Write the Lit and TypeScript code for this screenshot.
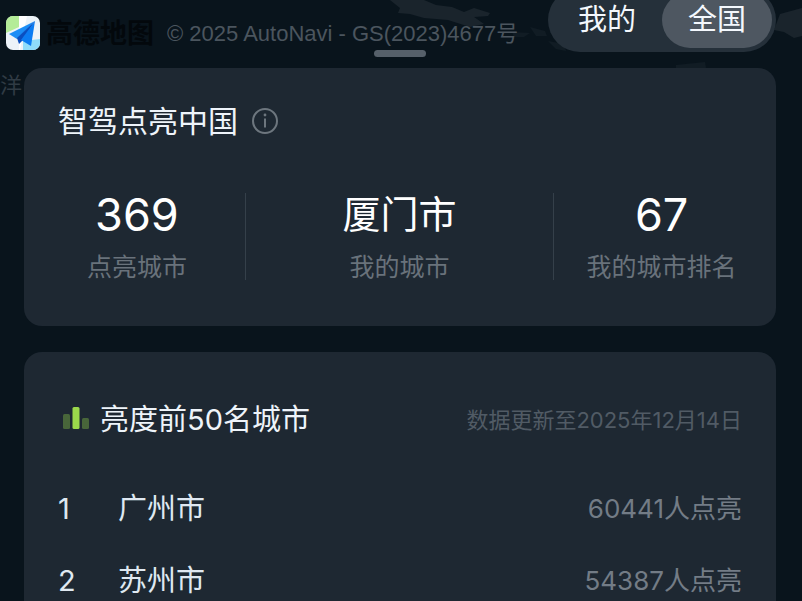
import { LitElement, html, css, svg } from "lit";
import { customElement, state } from "lit/decorators.js";

interface Stat {
  value: string;
  label: string;
}

interface CityRow {
  rank: number;
  name: string;
  count: number;
}

const STATS: Stat[] = [
  { value: "369", label: "点亮城市" },
  { value: "厦门市", label: "我的城市" },
  { value: "67", label: "我的城市排名" },
];

const CITIES: CityRow[] = [
  { rank: 1, name: "广州市", count: 60441 },
  { rank: 2, name: "苏州市", count: 54387 },
];

const TABS = ["我的", "全国"];

const logo = svg`
  <svg class="logo" viewBox="0 0 34 34" role="img" aria-label="高德地图">
    <defs>
      <clipPath id="tile"><rect width="34" height="34" rx="7" /></clipPath>
    </defs>
    <g clip-path="url(#tile)">
      <rect width="34" height="34" fill="#edf3f8" />
      <path d="M0 0H13V11L0 17Z" fill="#b4ec98" />
      <path d="M13 0H21L14 34H13Z" fill="#ffffff" />
      <path d="M17 25L34 23V34H17Z" fill="#8fdcfa" />
      <path d="M29 5L3 18L11 23Z" fill="#1c8ef6" />
      <path d="M29 5L11 22L13 28L17 24Z" fill="#0a4fc0" />
      <path d="M29 5L15 24L25 30Z" fill="#0c7cf2" />
    </g>
  </svg>`;

@customElement("app-root")
export class AppRoot extends LitElement {
  @state() private tab = "全国";

  static styles = css`
    :host {
      display: block;
      position: relative;
      height: 100vh;
      overflow: hidden;
      background: #09141c;
      color: #eef4fa;
      font-family: "Inter", "Noto Sans CJK SC", sans-serif;
      font-size: 29px;
      line-height: 42px;
    }
    * {
      box-sizing: border-box;
    }
    .map {
      position: absolute;
      top: 0;
      right: 0;
      width: 802px;
      height: 100px;
    }
    .place {
      position: absolute;
      top: 68px;
      left: 0;
      font-size: 22px;
      line-height: 34px;
      color: #303b44;
    }
    .page {
      position: relative;
      display: flex;
      flex-direction: column;
      min-height: 100%;
    }
    .credit {
      display: flex;
      align-items: center;
      height: 50px;
      padding: 16px 6px 0;
    }
    .logo {
      width: 34px;
      height: 34px;
      flex: none;
    }
    .brand,
    .copyright {
      line-height: 34px;
      padding-top: 2px;
    }
    .brand {
      margin-left: 6px;
      font-size: 27px;
      font-weight: 700;
      color: #03080c;
    }
    .copyright {
      margin-left: 13px;
      font-family: "Liberation Sans", "Noto Sans CJK SC", sans-serif;
      font-size: 22px;
      color: #4b555e;
    }
    .tabs {
      position: absolute;
      top: -12px;
      right: 26px;
      display: flex;
      padding: 4px;
      border-radius: 32px;
      background: #25303a;
    }
    .tab {
      width: 110px;
      height: 56px;
      padding: 0;
      border: 0;
      border-radius: 28px;
      background: none;
      color: #f4f8fd;
      font: inherit;
    }
    .tab[aria-pressed="true"] {
      background: #4e5761;
    }
    .sheet {
      flex: 1;
      display: flex;
      flex-direction: column;
      padding: 0 26px 0 24px;
    }
    .handle {
      align-self: center;
      width: 52px;
      height: 7px;
      margin-bottom: 11px;
      border-radius: 4px;
      background: #56606a;
    }
    .card {
      border-radius: 18px;
      background: #1e2832;
    }
    .summary {
      padding: 32px 0 46px;
      margin-bottom: 26px;
    }
    .ranking {
      flex: 1;
      padding: 47px 34px 0;
      border-radius: 18px 18px 0 0;
    }
    h1,
    h2 {
      margin: 0;
      font-size: inherit;
      font-weight: 400;
    }
    .title {
      display: flex;
      align-items: center;
      gap: 14px;
      padding: 0 34px;
    }
    .title h1 {
      font-size: 30px;
    }
    .info {
      width: 26px;
      height: 26px;
      padding: 0;
      border: 0;
      background: none;
      color: #6d767e;
    }
    .info svg {
      display: block;
      width: 26px;
      height: 26px;
    }
    .stats {
      display: grid;
      grid-template-columns: 7fr 10fr 7fr;
      margin: 51px 0 0;
      padding: 0 7px 0 5px;
    }
    .stat {
      display: flex;
      flex-direction: column-reverse;
      gap: 18px;
      text-align: center;
    }
    .stat + .stat {
      border-left: 1px solid #35404a;
    }
    .stat dd {
      margin: 0;
      font-size: 38px;
      line-height: 43px;
      color: #ffffff;
    }
    .stat .number {
      font-size: 45px;
    }
    .stat dt {
      font-size: 25px;
      line-height: 26px;
      color: #69727b;
    }
    .heading {
      display: flex;
      align-items: center;
      margin-bottom: 32px;
    }
    .bars {
      width: 42px;
      height: 32px;
      flex: none;
    }
    .updated {
      margin-left: auto;
      font-size: 22px;
      color: #515b65;
    }
    table {
      width: 100%;
      border-collapse: collapse;
    }
    td,
    th {
      height: 72px;
      padding: 0;
      text-align: left;
      font-weight: 400;
      color: #dfe8f1;
    }
    .rank {
      width: 60px;
    }
    td.count {
      text-align: right;
      font-size: 26px;
      color: #737c86;
    }
  `;

  render() {
    return html`
      <svg class="map" viewBox="0 0 802 100" aria-hidden="true">
        <g fill="#1a242c">
          <path d="M390 0H424L436 5L452 7L464 12L474 8L490 13L488 16L474 17L484 24L470 27L448 20L424 18L410 14L398 13L400 8Z" />
          <path d="M774 30L780 14L802 8V36L794 38L784 32Z" />
        </g>
        <g fill="#111c24">
          <path d="M530 27L545 31L547 36L536 36Z" />
          <path d="M548 41L564 44L566 51L556 49Z" />
          <path d="M512 32L530 33L524 37H514Z" />
          <path d="M676 65L705 62L706 68H676Z" />
        </g>
      </svg>
      <span class="place">洋</span>
      <div class="page">
        <header class="credit">
          ${logo}
          <span class="brand">高德地图</span>
          <span class="copyright">© 2025 AutoNavi - GS(2023)4677号</span>
        </header>
        <main class="sheet">
          <div class="handle"></div>
          <section class="card summary">
            <div class="title">
              <h1>智驾点亮中国</h1>
              <button class="info" aria-label="说明">
                <svg viewBox="0 0 26 26" fill="none" stroke="currentColor" stroke-width="2">
                  <circle cx="13" cy="13" r="12" />
                  <path d="M13 10.500V19.500" />
                  <circle cx="13" cy="7" r="1.4" fill="currentColor" stroke="none" />
                </svg>
              </button>
            </div>
            <dl class="stats">
              ${STATS.map(
                (s) => html`
                  <div class="stat">
                    <dt>${s.label}</dt>
                    <dd class=${/^\d+$/.test(s.value) ? "number" : "text"}>${s.value}</dd>
                  </div>
                `
              )}
            </dl>
          </section>
          <section class="card ranking">
            <div class="heading">
              <svg class="bars" viewBox="0 0 42 32" aria-hidden="true">
                <rect x="5" y="10" width="7" height="15" rx="1.5" fill="#48663a" />
                <rect x="14.500" y="3" width="7" height="22" rx="1.5" fill="#9bd84b" />
                <rect x="24" y="14" width="7" height="11" rx="1.5" fill="#48663a" />
              </svg>
              <h2>亮度前50名城市</h2>
              <span class="updated">数据更新至2025年12月14日</span>
            </div>
            <table>
              <tbody>
                ${CITIES.map(
                  (c) => html`
                    <tr>
                      <td class="rank">${c.rank}</td>
                      <th scope="row">${c.name}</th>
                      <td class="count">${c.count}人点亮</td>
                    </tr>
                  `
                )}
              </tbody>
            </table>
          </section>
        </main>
      </div>
      <nav class="tabs">
        ${TABS.map(
          (t) => html`
            <button
              class="tab"
              aria-pressed=${this.tab === t ? "true" : "false"}
              @click=${() => (this.tab = t)}
            >${t}</button>
          `
        )}
      </nav>
    `;
  }
}
